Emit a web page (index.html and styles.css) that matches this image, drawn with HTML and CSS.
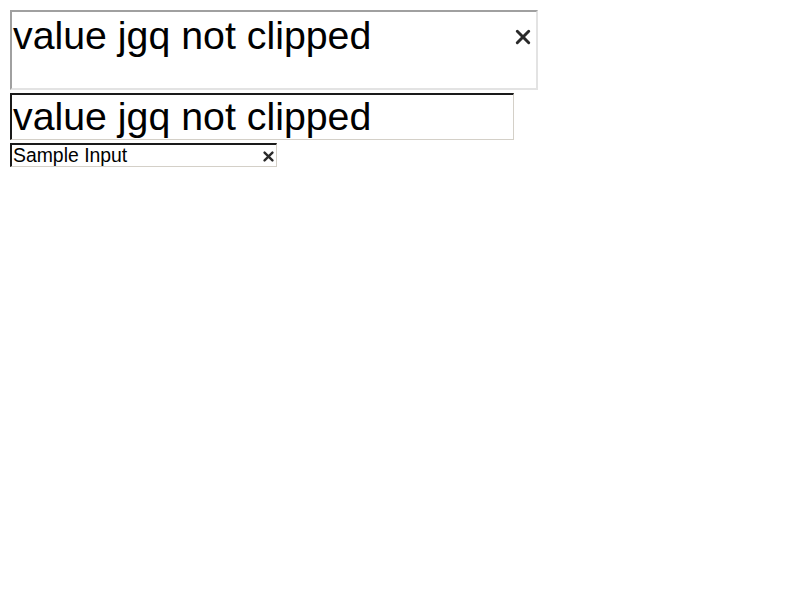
FILE: index.html
```html
<!DOCTYPE html>
<html>
<head>
<meta charset="utf-8">
<link rel="stylesheet" href="styles.css">
</head>
<body>
<div class="stack">
  <div class="field field-big">
    <span class="value">value jgq not clipped</span>
    <svg class="clear clear-big" viewBox="0 0 14 14"><path d="M2 2 L12 12 M12 2 L2 12"/></svg>
  </div>
  <div class="field field-mid">
    <span class="value">value jgq not clipped</span>
  </div>
  <div class="field field-small">
    <span class="value">Sample Input</span>
    <svg class="clear clear-small" viewBox="0 0 14 14"><path d="M2 2 L12 12 M12 2 L2 12"/></svg>
  </div>
</div>
</body>
</html>
```
FILE: styles.css
```css
html, body {
  margin: 0;
  padding: 0;
  background: #fff;
}
body {
  font-family: "Liberation Sans", Arial, sans-serif;
  color: #000;
}
.stack {
  display: flex;
  flex-direction: column;
  align-items: flex-start;
  gap: 3px;
  padding: 10px 0 0 10px;
}
.field {
  box-sizing: border-box;
  display: flex;
  align-items: flex-start;
  justify-content: space-between;
  overflow: hidden;
  white-space: nowrap;
}
.value {
  line-height: 1.15;
}
.field-big {
  width: 528px;
  height: 80px;
  border-top: 2px solid #a0a0a0;
  border-left: 2px solid #a0a0a0;
  border-right: 2px solid #e3e3e3;
  border-bottom: 2px solid #e3e3e3;
  padding: 1px 5px 0 1px;
  font-size: 39.3px;
}
.field-mid {
  width: 504px;
  height: 47px;
  border-top: 2px solid #1a1a1a;
  border-left: 2px solid #1a1a1a;
  border-right: 1px solid #d4d0c8;
  border-bottom: 1px solid #d4d0c8;
  padding: 0 0 0 1px;
  font-size: 39.3px;
  align-items: center;
}
.field-small {
  width: 267px;
  height: 24px;
  border-top: 2px solid #1a1a1a;
  border-left: 2px solid #1a1a1a;
  border-right: 1px solid #d4d0c8;
  border-bottom: 1px solid #d4d0c8;
  padding: 0 2px 0 1px;
  font-size: 19.4px;
  align-items: center;
}
.clear {
  flex: none;
  fill: none;
  stroke: #2a2a2a;
  stroke-linecap: round;
}
.clear-big {
  width: 16px;
  height: 16px;
  stroke-width: 2.6;
  margin-top: 16px;
}
.clear-small {
  width: 11px;
  height: 11px;
  stroke-width: 3;
  margin-top: 2px;
}
```
